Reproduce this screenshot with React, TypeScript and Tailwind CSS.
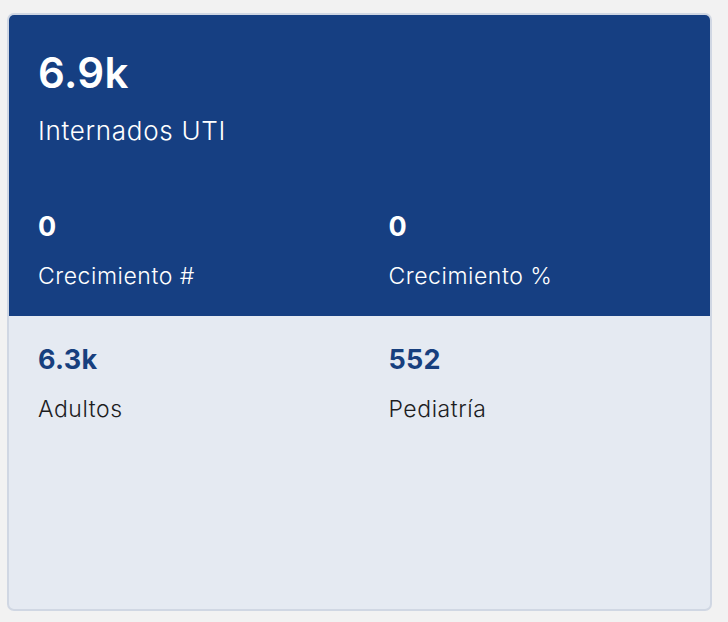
import React from "react";

function Stat({ value, label, dark }: { value: string; label: string; dark: boolean }) {
  return (
    <div className="pl-[29px]">
      <div className={`text-[27px] font-bold leading-none tracking-[0.3px] ${dark ? "text-white" : "text-[#173f7e]"}`}>{value}</div>
      <div className={`mt-[25px] text-[23px] font-light leading-none tracking-[0.55px] ${dark ? "text-white" : "text-[#1d1d1f]"}`}>{label}</div>
    </div>
  );
}

export default function App() {
  return (
    <div className="min-h-[622px] w-[728px] bg-[#f2f2f2] pt-[13px] pl-[7px]" style={{ fontFamily: "Inter, 'Noto Sans', sans-serif" }}>
      <div className="w-[705px] h-[598px] rounded-[7px] border-2 border-[#d0d7e3] bg-[#e5eaf2] overflow-hidden flex flex-col">
        <div className="bg-[#163f82] h-[301px]">
          <div className="pl-[29px] pt-[37px]">
            <div className="text-[42px] font-semibold leading-none text-white tracking-[0.4px]">6.9k</div>
            <div className="mt-[24px] text-[26px] font-light leading-none text-white tracking-[0.7px]">Internados UTI</div>
          </div>
          <div className="grid grid-cols-2 mt-[69px]">
            <Stat value="0" label="Crecimiento #" dark />
            <Stat value="0" label="Crecimiento %" dark />
          </div>
        </div>
        <div className="grid grid-cols-2 pt-[30px]">
          <Stat value="6.3k" label="Adultos" dark={false} />
          <Stat value="552" label="Pediatría" dark={false} />
        </div>
      </div>
    </div>
  );
}
